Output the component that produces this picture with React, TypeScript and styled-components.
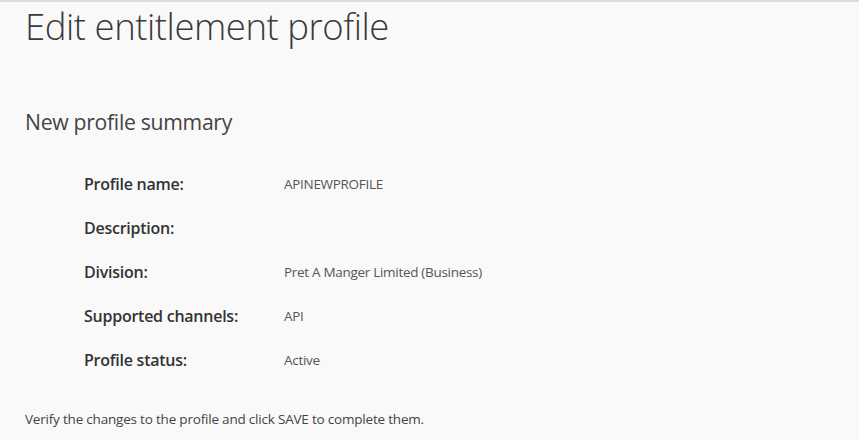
import React from "react";
import styled, { createGlobalStyle } from "styled-components";

const Global = createGlobalStyle`
  html, body { margin: 0; padding: 0; background: #f9f9f9; }
  body { font-family: "Open Sans", "Noto Sans", sans-serif; color: #333; }
`;

const Page = styled.div`
  border-top: 2px solid #dcdcdc;
  padding: 0 25px;
  min-height: 438px;
  background: #f9f9f9;
`;

const Title = styled.h1`
  margin: 0;
  padding-top: 2px;
  font-size: 36.5px;
  font-weight: 300;
  line-height: 44px;
  color: #3a3a3a;
  letter-spacing: -0.45px;
`;

const Subtitle = styled.h2`
  margin: 59px 0 0;
  font-size: 21.2px;
  font-weight: 400;
  line-height: 30px;
  color: #444;
  letter-spacing: -0.3px;
`;

const List = styled.dl`
  margin: 25px 0 0 59px;
  display: grid;
  grid-template-columns: 200px 1fr;
  grid-auto-rows: 44px;
  align-items: center;
`;

const Label = styled.dt`
  font-size: 16px;
  font-weight: 600;
  color: #333;
  letter-spacing: -0.25px;
`;

const Value = styled.dd`
  margin: 0;
  font-size: 13.5px;
  color: #555;
  letter-spacing: -0.3px;
`;

const Footer = styled.p`
  margin: 28px 0 0;
  font-size: 13.5px;
  color: #444;
  letter-spacing: -0.2px;
`;

const rows: [string, string][] = [
  ["Profile name:", "APINEWPROFILE"],
  ["Description:", ""],
  ["Division:", "Pret A Manger Limited (Business)"],
  ["Supported channels:", "API"],
  ["Profile status:", "Active"],
];

export default function App() {
  return (
    <>
      <Global />
      <Page>
        <Title>Edit entitlement profile</Title>
        <Subtitle>New profile summary</Subtitle>
        <List>
          {rows.map(([l, v]) => (
            <React.Fragment key={l}>
              <Label>{l}</Label>
              <Value>{v}</Value>
            </React.Fragment>
          ))}
        </List>
        <Footer>Verify the changes to the profile and click SAVE to complete them.</Footer>
      </Page>
    </>
  );
}
